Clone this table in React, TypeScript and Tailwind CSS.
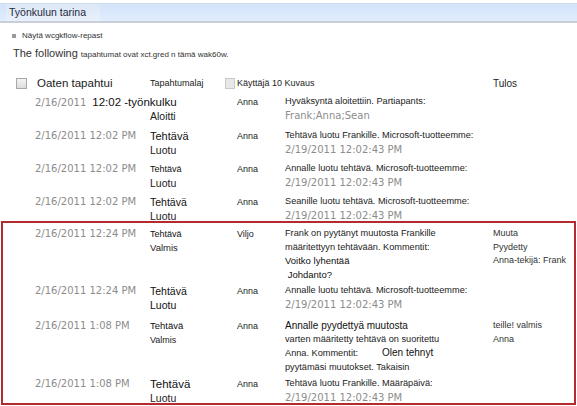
import React from 'react';

type Line = { text: React.ReactNode; cls: string };

type Row = {
  h: string;
  date: React.ReactNode;
  type: Line[];
  user: string;
  desc: Line[];
  result?: string[];
};

const sm = 'text-[9.2px] text-[#222]';
const md = 'text-[10.5px] text-[#222]';
const gray = "text-[10px] text-[#8c8c8c] font-['DejaVu_Sans',sans-serif]";
const stamp = { text: '2/19/2011 12:02:43 PM', cls: gray };

const topRows: Row[] = [
  {
    h: 'h-[34px]',
    date: (
      <span className="whitespace-nowrap">
        2/16/2011
        <span className="ml-[6px] text-[11.5px] text-[#111] font-['Liberation_Sans',sans-serif]">12:02 -työnkulku</span>
      </span>
    ),
    type: [{ text: '\u00a0', cls: md }, { text: 'Aloitti', cls: md }],
    user: 'Anna',
    desc: [
      { text: 'Hyväksyntä aloitettiin. Partiapants:', cls: sm },
      { text: 'Frank;Anna;Sean', cls: gray },
    ],
  },
  {
    h: 'h-[33px]',
    date: '2/16/2011 12:02 PM',
    type: [{ text: 'Tehtävä', cls: 'text-[11px] text-[#111]' }, { text: 'Luotu', cls: md }],
    user: 'Anna',
    desc: [{ text: 'Tehtävä luotu Frankille. Microsoft-tuotteemme:', cls: sm }, stamp],
  },
  {
    h: 'h-[33px]',
    date: '2/16/2011 12:02 PM',
    type: [{ text: 'Tehtävä', cls: 'text-[9px] text-[#111]' }, { text: 'Luotu', cls: md }],
    user: 'Anna',
    desc: [{ text: 'Annalle luotu tehtävä. Microsoft-tuotteemme:', cls: sm }, stamp],
  },
  {
    h: 'h-[29px]',
    date: '2/16/2011 12:02 PM',
    type: [{ text: 'Tehtävä', cls: 'text-[10.5px] text-[#111]' }, { text: 'Luotu', cls: md }],
    user: 'Anna',
    desc: [{ text: 'Seanille luotu tehtävä. Microsoft-tuotteemme:', cls: sm }, stamp],
  },
];

const boxRows: Row[] = [
  {
    h: 'h-[57px]',
    date: '2/16/2011 12:24 PM',
    type: [{ text: 'Tehtävä', cls: 'text-[9px] text-[#111]' }, { text: 'Valmis', cls: 'text-[9.5px] text-[#222]' }],
    user: 'Viljo',
    desc: [
      { text: 'Frank on pyytänyt muutosta Frankille', cls: sm },
      { text: 'määritettyyn tehtävään. Kommentit:', cls: sm },
      { text: 'Voitko lyhentää', cls: 'text-[9.5px] text-[#111]' },
      { text: '\u00a0Johdanto?', cls: 'text-[9.5px] text-[#111]' },
    ],
    result: ['Muuta', 'Pyydetty', 'Anna-tekijä: Frank'],
  },
  {
    h: 'h-[35px]',
    date: '2/16/2011 12:24 PM',
    type: [{ text: 'Tehtävä', cls: 'text-[10.5px] text-[#111]' }, { text: 'Luotu', cls: 'text-[10.5px] text-[#111]' }],
    user: 'Anna',
    desc: [{ text: 'Annalle luotu tehtävä. Microsoft-tuotteemme:', cls: sm }, stamp],
  },
  {
    h: 'h-[58px]',
    date: '2/16/2011 1:08 PM',
    type: [{ text: 'Tehtävä', cls: 'text-[9.5px] text-[#111]' }, { text: 'Valmis', cls: 'text-[9px] text-[#222]' }],
    user: 'Anna',
    desc: [
      { text: 'Annalle pyydettyä muutosta', cls: 'text-[10px] text-[#111]' },
      { text: 'varten määritetty tehtävä on suoritettu', cls: sm },
      {
        text: (
          <>
            Anna. Kommentit:<span className="ml-[24px] text-[10px] text-[#111]">Olen tehnyt</span>
          </>
        ),
        cls: sm,
      },
      { text: 'pyytämäsi muutokset. Takaisin', cls: sm },
    ],
    result: ['teille! valmis', 'Anna'],
  },
  {
    h: 'h-[29px]',
    date: '2/16/2011 1:08 PM',
    type: [{ text: 'Tehtävä', cls: 'text-[11.5px] text-[#111]' }, { text: 'Luotu', cls: md }],
    user: 'Anna',
    desc: [{ text: 'Tehtävä luotu Frankille. Määräpäivä:', cls: sm }, stamp],
  },
];

function HistoryRow({ row, inset }: { row: Row; inset?: boolean }) {
  return (
    <div
      className={`grid grid-cols-[115px_87px_48px_208px_1fr] items-start pt-[3px] ${row.h} ${
        inset ? 'pl-[32px]' : 'pl-[35px]'
      }`}
    >
      <div className="text-[10px] leading-[14px] text-[#8c8c8c] font-['DejaVu_Sans',sans-serif] whitespace-nowrap">
        {row.date}
      </div>
      <div className="flex flex-col leading-[14px]">
        {row.type.map((l, i) => (
          <span key={i} className={l.cls}>
            {l.text}
          </span>
        ))}
      </div>
      <div className="text-[9px] leading-[14px] text-[#222]">{row.user}</div>
      <div className="flex flex-col leading-[13.7px] whitespace-nowrap">
        {row.desc.map((l, i) => (
          <span key={i} className={l.cls}>
            {l.text}
          </span>
        ))}
      </div>
      <div className="flex flex-col leading-[13.5px] text-[9px] text-[#333] whitespace-nowrap">
        {row.result?.map((r, i) => (
          <span key={i}>{r}</span>
        ))}
      </div>
    </div>
  );
}

export default function App() {
  return (
    <div className="w-[577px] h-[406px] overflow-hidden bg-white font-['Liberation_Sans',Arial,sans-serif]">
      {/* Title bar */}
      <div className="mt-[3px] h-[20px] flex items-stretch bg-gradient-to-b from-[#d3e3f9] to-[#e1edfd] border-t border-[#cddcf0] border-b-2 border-b-[#c9ced8]">
        <div className="ml-[6px] w-[94px] flex items-center pl-[3px] bg-gradient-to-b from-[#dde8f7] to-[#e8f0fb] text-[10.5px] text-[#1e2a3a]">
          Työnkulun tarina
        </div>
      </div>

      <div className="mt-[7px] ml-[12px] flex items-center gap-[6px] h-[12px]">
        <span className="w-[4px] h-[4px] bg-[#9a9a9a]" />
        <span className="text-[8px] text-[#333]">Näytä wcgkflow-repast</span>
      </div>

      <div className="mt-[3px] ml-[13px] flex items-baseline gap-[3px] h-[16px]">
        <span className="text-[11px] text-[#333]">The following</span>
        <span className="text-[8px] text-[#333]">tapahtumat ovat xct.gred n tämä wak60w.</span>
      </div>

      {/* Column headers */}
      <div className="mt-[11px] h-[23px] grid grid-cols-[134px_87px_48px_208px_1fr] items-center pl-[16px]">
        <div className="flex items-center gap-[10px]">
          <span className="w-[11px] h-[11px] border border-[#a8a8a8] bg-gradient-to-b from-[#f4f4f4] to-[#dcdcdc]" />
          <span className="text-[11.5px] text-[#222]">Oaten tapahtui</span>
        </div>
        <div className="flex items-center justify-between pr-[2px]">
          <span className="text-[9px] text-[#222]">Tapahtumalaj</span>
          <span className="w-[10px] h-[11px] border border-[#c8c8c8] bg-[#e8e8e8]" />
        </div>
        <div className="text-[9px] text-[#222] whitespace-nowrap">Käyttäjä 10 Kuvaus</div>
        <div />
        <div className="text-[10px] text-[#222]">Tulos</div>
      </div>

      <div className="mt-[-3px]">
        {topRows.map((r, i) => (
          <HistoryRow key={i} row={r} />
        ))}
      </div>

      <div className="ml-[1px] w-[575px] border-2 border-[#b42a2f] pt-[1px]">
        {boxRows.map((r, i) => (
          <HistoryRow key={i} row={r} inset />
        ))}
      </div>
    </div>
  );
}
